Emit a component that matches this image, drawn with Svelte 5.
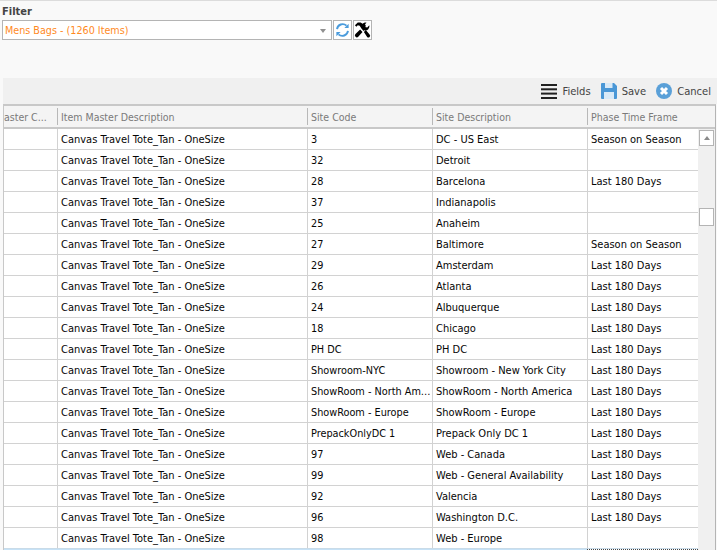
<script lang="ts">
  const item = "Canvas Travel Tote_Tan - OneSize";
  const rows: string[][] = [
    ["3", "DC - US East", "Season on Season"],
    ["32", "Detroit", ""],
    ["28", "Barcelona", "Last 180 Days"],
    ["37", "Indianapolis", ""],
    ["25", "Anaheim", ""],
    ["27", "Baltimore", "Season on Season"],
    ["29", "Amsterdam", "Last 180 Days"],
    ["26", "Atlanta", "Last 180 Days"],
    ["24", "Albuquerque", "Last 180 Days"],
    ["18", "Chicago", "Last 180 Days"],
    ["PH DC", "PH DC", "Last 180 Days"],
    ["Showroom-NYC", "Showroom - New York City", "Last 180 Days"],
    ["ShowRoom - North America", "ShowRoom - North America", "Last 180 Days"],
    ["ShowRoom - Europe", "ShowRoom - Europe", "Last 180 Days"],
    ["PrepackOnlyDC 1", "Prepack Only DC 1", "Last 180 Days"],
    ["97", "Web - Canada", "Last 180 Days"],
    ["99", "Web - General Availability", "Last 180 Days"],
    ["92", "Valencia", "Last 180 Days"],
    ["96", "Washington D.C.", "Last 180 Days"],
    ["98", "Web - Europe", ""],
  ];
</script>

<div class="page">
  <div class="filter">
    <div class="label">Filter</div>
    <div class="filter-row">
      <div class="combo">
        <span>Mens Bags - (1260 Items)</span>
        <i class="caret"></i>
      </div>
      <button class="icon-btn" aria-label="Refresh">
        <svg width="18" height="18" viewBox="0 0 18 18" fill="none" stroke="#4a9bdc" stroke-width="2">
          <path d="M3.200 8a6 6 0 0 1 10-3.600" />
          <path d="M14.800 10a6 6 0 0 1-10 3.600" />
          <path d="M15.500 2.500v4.500h-4.500z" fill="#4a9bdc" stroke="none" />
          <path d="M2.500 15.500v-4.500h4.500z" fill="#4a9bdc" stroke="none" />
        </svg>
      </button>
      <button class="icon-btn" aria-label="Tools">
        <svg width="18" height="18" viewBox="0 0 18 18" fill="#000">
          <path d="M1 4l3-3h3l3 2 1-.500 1.500 1.500-.5 1 .5.500-2.500 2.500-.5-.5-1 .5L7.500 7 6 4.500 4 4 2.500 5.500z" />
          <path d="M6.500 8.500l2.500 2.500-4.500 5.200a1.800 1.800 0 0 1-2.900-2.900z" />
          <path d="M11.500 1a4.200 4.200 0 0 1 1.800.2L11 3.500l.6 2.300 2.400.6 2.200-2.300a4.200 4.200 0 0 1-5.300 5.200l-.7.700L8 7.600l.6-.7A4.200 4.200 0 0 1 11.500 1z" />
          <path d="M10.500 11l2-2 4 4.700a1.700 1.700 0 0 1-2.600 2.600z" />
        </svg>
      </button>
    </div>
  </div>

  <div class="toolbar">
    <button class="tool">
      <svg width="16" height="15" viewBox="0 0 16 15" fill="#222">
        <rect width="16" height="2" /><rect y="4.300" width="16" height="2" />
        <rect y="8.600" width="16" height="2" /><rect y="13" width="16" height="2" />
      </svg>
      Fields
    </button>
    <button class="tool">
      <svg width="16" height="16" viewBox="0 0 16 16">
        <path d="M1 0h12l3 3v12a1 1 0 0 1-1 1H1a1 1 0 0 1-1-1V1a1 1 0 0 1 1-1z" fill="#4a97d6" />
        <rect x="4" y="0" width="7.500" height="5" fill="#d8e9f7" />
        <rect x="3" y="9" width="10" height="7" fill="#d8e9f7" />
      </svg>
      Save
    </button>
    <button class="tool">
      <svg width="16" height="16" viewBox="0 0 16 16">
        <circle cx="8" cy="8" r="8" fill="#5aa0d8" />
        <path d="M5 5l6 6M11 5l-6 6" stroke="#fff" stroke-width="3" />
      </svg>
      Cancel
    </button>
  </div>

  <div class="grid">
    <div class="head">
      <div class="hcell c0">aster C...</div>
      <div class="hcell c1">Item Master Description</div>
      <div class="hcell c2">Site Code</div>
      <div class="hcell c3">Site Description</div>
      <div class="hcell c4">Phase Time Frame</div>
    </div>
    <div class="body">
      <div class="rows">
        {#each rows as r}
          <div class="row">
            <div class="cell c0"></div>
            <div class="cell c1">{item}</div>
            <div class="cell c2">{r[0]}</div>
            <div class="cell c3">{r[1]}</div>
            <div class="cell c4">{r[2]}</div>
          </div>
        {/each}
        <div class="selected">
          <div class="sel-band"></div>
          <div class="sel-focus"></div>
        </div>
      </div>
      <div class="scroll">
        <div class="arrow"><i></i></div>
        <div class="thumb"></div>
      </div>
    </div>
  </div>
</div>

<style>
  :global(body) {
    margin: 0;
    overflow: hidden;
    background: #f9f9f9;
  }

  .page {
    width: 717px;
    height: 550px;
    overflow: hidden;
    border-top: 1px solid #dcdcdc;
    box-sizing: border-box;
    font-family: "DejaVu Sans Condensed", "DejaVu Sans", sans-serif;
    font-stretch: condensed;
    font-size: 11px;
    color: #060606;
  }

  .filter {
    height: 77px;
    padding: 4px 0 0 2px;
    box-sizing: border-box;
  }

  .label {
    font-weight: 700;
    color: #444;
    height: 15px;
    line-height: 14px;
  }

  .filter-row {
    display: flex;
    gap: 1px;
  }

  .combo {
    width: 330px;
    height: 20px;
    box-sizing: border-box;
    border: 1px solid #b4b4b4;
    background: #fff;
    color: #ff8a1e;
    font-size: 10.700px;
    padding: 1px 0 0 2px;
    line-height: 18px;
    display: flex;
    justify-content: space-between;
    align-items: center;
  }

  .caret {
    border: 3px solid transparent;
    border-top: 4px solid #909090;
    border-bottom: 0;
    margin-right: 5px;
  }

  .icon-btn {
    width: 19px;
    height: 20px;
    padding: 0;
    border: 1px solid #b4b4b4;
    background: #fff;
    display: flex;
    align-items: center;
    justify-content: center;
  }

  .toolbar {
    height: 26px;
    margin-left: 3px;
    background: #f0f0f0;
    display: flex;
    justify-content: flex-end;
    align-items: center;
    gap: 10px;
    padding-right: 6px;
    box-sizing: border-box;
  }

  .tool {
    border: 0;
    background: none;
    padding: 0;
    font: inherit;
    font-size: 11.100px;
    color: #444;
    display: flex;
    align-items: center;
    gap: 5px;
  }

  .grid {
    margin: 0 1px 0 3px;
    border-top: 2px solid #c8c8c8;
    border-left: 1px solid #c8c8c8;
    border-right: 1px solid #b4b4b4;
  }

  .head {
    display: flex;
    height: 21px;
    background: #f4f4f4;
    border-bottom: 2px solid #c8c8c8;
    color: #7a7a7a;
    font-size: 10.500px;
  }

  .hcell {
    box-sizing: border-box;
    padding-left: 3px;
    white-space: nowrap;
    overflow: hidden;
    border-right: 1px solid #b8b8b8;
    margin: 2px 0;
    line-height: 19px;
  }

  .body {
    display: flex;
  }

  .rows {
    width: 694px;
  }

  .row {
    display: flex;
    height: 21px;
    background: #fff;
    border-bottom: 1px solid #d2d2d2;
    box-sizing: border-box;
  }

  .row:nth-last-child(2) {
    border-bottom-color: #c9dbe8;
  }

  .selected {
    display: flex;
    height: 1px;
    background: #c6e2f7;
  }

  .sel-band {
    width: 583px;
  }

  .sel-focus {
    flex: 1;
    border-top: 1px dotted #444;
    background: #fff;
  }

  .cell {
    box-sizing: border-box;
    line-height: 20px;
    padding: 1px 0 0 3px;
    white-space: nowrap;
    overflow: hidden;
    text-overflow: ellipsis;
    border-right: 1px solid #d2d2d2;
  }

  .c0 { width: 54px; padding-left: 0; }
  .c1 { width: 250px; }
  .c2 { width: 125px; }
  .cell.c2 { font-size: 10.800px; }
  .c3 { width: 155px; }
  .c4 { width: 110px; border-right: 0; }
  .hcell.c4 { width: 111px; }

  .scroll {
    flex: 1;
    background: #f0f0f0;
    padding: 1px 1px 0;
  }

  .arrow, .thumb {
    width: 15px;
    box-sizing: border-box;
    border: 1px solid #b4b4b4;
    background: #fff;
  }

  .arrow {
    height: 16px;
    display: flex;
    align-items: center;
    justify-content: center;
  }

  .arrow i {
    border: 3.500px solid transparent;
    border-bottom: 4px solid #8a8a8a;
    border-top: 0;
  }

  .thumb {
    height: 18px;
    margin-top: 62px;
  }
</style>
